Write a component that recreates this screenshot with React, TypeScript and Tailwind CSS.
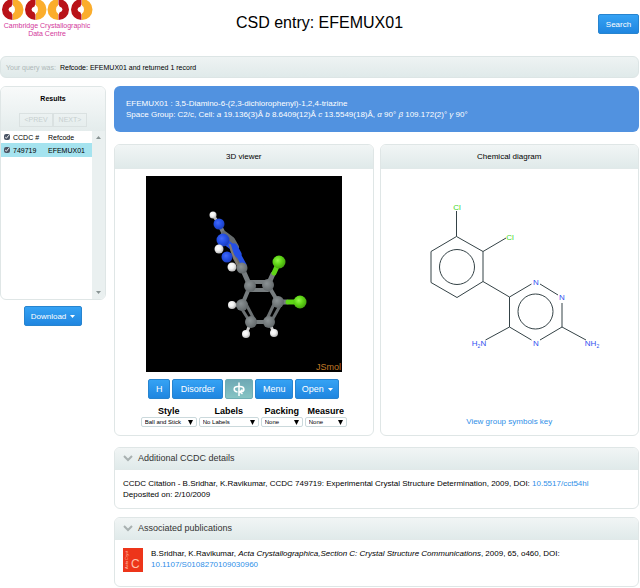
import type { ReactNode } from "react";

const atoms = [
  { x: 213, y: 215, r: 3.5, fill: "url(#hydrogen)" },
  { x: 219, y: 224, r: 5.5, fill: "url(#nitrogen)" },
  { x: 223, y: 240, r: 6.5, fill: "url(#nitrogen)" },
  { x: 219, y: 249, r: 4.5, fill: "url(#hydrogen)" },
  { x: 227, y: 257, r: 5.5, fill: "url(#nitrogen)" },
  { x: 232, y: 267, r: 4.5, fill: "url(#hydrogen)" },
  { x: 242, y: 268, r: 5.5, fill: "url(#carbon)" },
  { x: 250, y: 286, r: 6, fill: "url(#carbon)" },
  { x: 268, y: 285, r: 6, fill: "url(#carbon)" },
  { x: 278, y: 302, r: 6, fill: "url(#carbon)" },
  { x: 269, y: 322, r: 6, fill: "url(#carbon)" },
  { x: 251, y: 322, r: 6, fill: "url(#carbon)" },
  { x: 242, y: 305, r: 6, fill: "url(#carbon)" },
  { x: 279, y: 262, r: 6.5, fill: "url(#chlorine)" },
  { x: 300, y: 302, r: 6.5, fill: "url(#chlorine)" },
  { x: 232, y: 305, r: 4, fill: "url(#hydrogen)" },
  { x: 246, y: 334, r: 4, fill: "url(#hydrogen)" },
  { x: 274, y: 333, r: 4, fill: "url(#hydrogen)" },
];

const atomColors = [
  { id: "carbon", light: "#8b9294", base: "#777d7f", dark: "#606668" },
  { id: "hydrogen", light: "#ffffff", base: "#f0f0f0", dark: "#b5b5b5" },
  { id: "nitrogen", light: "#4469f8", base: "#2450e6", dark: "#1b3cb8" },
  { id: "chlorine", light: "#93f64a", base: "#5fd616", dark: "#449f0e" },
];

const viewerSelects = [
  { id: "style", label: "Style", value: "Ball and Stick", width: "w-14" },
  { id: "labels", label: "Labels", value: "No Labels", width: "w-15" },
  { id: "packing", label: "Packing", value: "None", width: "w-[42px]" },
  { id: "measure", label: "Measure", value: "None", width: "w-[42px]" },
];

const blueButton =
  "flex h-5 items-center justify-center rounded-xs border border-[#2784cf] bg-linear-to-b from-[#35a2f4] to-[#1f86e0] text-white";
const panel = "overflow-hidden rounded-md border border-[#dfe6e6] bg-white";
const panelHeader = "border-b border-[#e1e9e9] bg-linear-to-b from-[#f1f5f5] to-[#e0eaea]";
const link = "text-[#2f8fe8]";

function Caret() {
  return (
    <svg viewBox="0 0 5 3" className="ml-1 h-[3px] w-[5px]" fill="currentColor">
      <path d="M0 0h5L2.5 3z" />
    </svg>
  );
}

function CheckBox({ label }: { label: string }) {
  return <input type="checkbox" defaultChecked aria-label={label} className="mx-[3px] block size-[6px] accent-gray-600" />;
}

function Logo() {
  return (
    <div className="w-[94px] text-center text-[7px] leading-2 whitespace-nowrap text-[#d3389b]">
      <svg viewBox="0 0 94 22" className="block h-[22px] w-[94px]">
        {[12.5, 35.5, 58.5, 81.5].map((x, i) => (
          <g key={x} transform={i === 2 ? `rotate(180 ${x} 9.5)` : undefined}>
            <path d={`M${x} -1a10.5 10.5 0 0 0 0 21v-5.500a3 3 0 0 1-1-2q-3-1-3-3t3-3a3 3 0 0 1 1-2z`} fill="#b91218" />
            <path d={`M${x + 0.5} -1a10.5 10.5 0 0 1 0 21v-6.500q2-1 2-4t-2-4z`} fill="#fbad2c" />
          </g>
        ))}
      </svg>
      Cambridge Crystallographic
      <br />
      Data Centre
    </div>
  );
}

function Molecule() {
  return (
    <svg viewBox="146 176 196 196" className="block size-[196px] bg-black" role="img" aria-label="Ball and stick model">
      <defs>
        {atomColors.map((c) => (
          <radialGradient key={c.id} id={c.id} cx="40%" cy="38%" r="65%">
            <stop offset="0" stopColor={c.light} />
            <stop offset=".5" stopColor={c.base} />
            <stop offset="1" stopColor={c.dark} />
          </radialGradient>
        ))}
      </defs>
      <g fill="none" strokeLinecap="round" strokeLinejoin="round">
        <path d="M213 215l6 9" stroke="#bbb" strokeWidth="3" />
        <path d="M219 224l5 10" stroke="#777d7f" strokeWidth="4" />
        <path d="M224 234l8 6 4 7" stroke="#666b6d" strokeWidth="6" />
        <path d="M223 240l9 6 4 12 5 9" stroke="#6d6a66" strokeWidth="6" />
        <path d="M234 247l4 7" stroke="#2450e6" strokeWidth="7" />
        <path d="M238 254l6 11" stroke="#2450e6" strokeWidth="5" />
        <path d="M223 240l8 6" stroke="#2450e6" strokeWidth="6" />
        <path d="M230 245l3 10 5 10" stroke="#817b70" strokeWidth="2" />
        <path d="M242 268l8 18" stroke="#777d7f" strokeWidth="5" />
        <path d="M250 282h18M250 290h18M268 285l10 17M251 322h18M242 305l8-19" stroke="#777d7f" strokeWidth="4" />
        <path d="M275 302l-9 19M281 304l-10 18M240 306l10 16M246 304l9 17" stroke="#6b7072" strokeWidth="3" />
        <path d="M268 285l5-11M278 302h9" stroke="#777d7f" strokeWidth="5" />
        <path d="M274 273l5-11M288 302h12" stroke="#5fd616" strokeWidth="5" />
        <path d="M242 305h-10M251 322l-5 12M269 322l5 11" stroke="#ccc" strokeWidth="3" />
      </g>
      {atoms.map((atom) => (
        <circle key={`${atom.x}-${atom.y}`} cx={atom.x} cy={atom.y} r={atom.r} fill={atom.fill} />
      ))}
      <text x="341" y="370" textAnchor="end" fontSize="9" fill="#c17b27">JSmol</text>
    </svg>
  );
}

function ChemicalDiagram() {
  return (
    <svg viewBox="399 181 220 190" className="block h-[190px] w-[220px]" fontSize="8" role="img" aria-label="Chemical diagram">
      <g fill="none" stroke="#344246">
        <path d="M456.5 211v25.500l26.500 15v30l-26 16-26-15v-31l25.500-15M483 251.500l23-13.500M483 281.500l26.500 15.500 22-13M509.500 297v30l22 13M540 284l18 11M562 303v24l-22 13M509.500 327l-24 13M562 327l24 13" />
        <circle cx="457" cy="267" r="17.500" />
        <circle cx="535.500" cy="311.500" r="17.500" />
      </g>
      <g textAnchor="middle">
        <g fill="#3fd82a">
          <text x="457" y="210">Cl</text>
          <text x="510" y="240">Cl</text>
        </g>
        <g fill="#2f50f0">
          <text x="536" y="285">N</text>
          <text x="562" y="300">N</text>
          <text x="536" y="346">N</text>
          <text x="479" y="346">H<tspan dy="2" fontSize="5">2</tspan><tspan dy="-2">N</tspan></text>
          <text x="592" y="346">NH<tspan dy="2" fontSize="5">2</tspan></text>
        </g>
      </g>
    </svg>
  );
}

function DetailSection({ title, children }: { title: string; children: ReactNode }) {
  return (
    <section className={panel}>
      <h2 className={`${panelHeader} flex h-[22px] items-center text-[9px] text-[#333]`}>
        <svg viewBox="0 0 10 7" className="mr-[5px] ml-2 h-[7px] w-[10px]" fill="none" stroke="#a9b1b1" strokeWidth="2">
          <path d="M1 1l4 4 4-4" />
        </svg>
        {title}
      </h2>
      {children}
    </section>
  );
}

export default function App() {
  return (
    <div className="min-h-screen bg-white pr-px font-['Liberation_Sans',Arial,sans-serif] text-[8px] leading-[11px] text-black">
      {/* --- HEADER --- */}
      <header className="grid h-14 grid-cols-[1fr_auto_1fr] items-start">
        <Logo />
        <h1 className="pt-3 text-base leading-[22px]">CSD entry: EFEMUX01</h1>
        <button className={`${blueButton} mt-[14px] w-[41px] justify-self-end`}>Search</button>
      </header>

      <div className="flex h-[22px] items-center rounded-md border border-[#dce5e5] bg-linear-to-b from-[#eef3f3] to-[#e0eaea] px-[5px] text-[7px]">
        <span className="mr-1 text-[#aeb8b8]">Your query was:</span>
        Refcode: EFEMUX01 and returned 1 record
      </div>

      <div className="mt-2 flex items-start gap-2">
        {/* --- RESULTS --- */}
        <aside className="w-[106px] shrink-0">
          <div className={`${panel} text-[7px]`}>
            <div className="flex h-11 flex-col items-center justify-between bg-linear-to-b from-[#f8fafa] to-[#e4ecec] pt-1.5 pb-1">
              <h2 className="font-bold">Results</h2>
              <div className="flex">
                <button disabled className="h-3.5 w-[34px] border border-[#dae1e1] leading-3 text-[#c7cfcf]">&lt;PREV</button>
                <button disabled className="h-3.5 w-[34px] border border-[#dae1e1] leading-3 text-[#c7cfcf]">NEXT&gt;</button>
              </div>
            </div>
            <div className="flex h-[168px]">
              <div className="flex-1">
                <table className="w-full table-fixed text-left">
                  <thead>
                    <tr className="h-3">
                      <th className="w-3"><CheckBox label="Select all" /></th>
                      <th className="w-[35px] font-normal">CCDC #</th>
                      <th className="font-normal">Refcode</th>
                    </tr>
                  </thead>
                  <tbody>
                    <tr className="h-3.5 bg-[#a5e3ef]">
                      <td><CheckBox label="Select 749719" /></td>
                      <td>749719</td>
                      <td>EFEMUX01</td>
                    </tr>
                  </tbody>
                </table>
              </div>
              <div className="flex w-[13px] flex-col items-center justify-between bg-[#eaf0f0] py-[5px] text-[#899494]">
                <svg viewBox="0 0 5 3" className="h-[3px] w-[5px]" fill="currentColor"><path d="M0 3h5L2.5 0z" /></svg>
                <svg viewBox="0 0 5 3" className="h-[3px] w-[5px]" fill="currentColor"><path d="M0 0h5L2.5 3z" /></svg>
              </div>
            </div>
          </div>
          <button className={`${blueButton} mx-auto mt-[6px] w-[58px]`}>Download<Caret /></button>
        </aside>

        <main className="min-w-0 flex-1">
          <div className="h-[46px] rounded-md bg-[#5192e0] px-3 pt-3 text-white">
            <p>EFEMUX01 : 3,5-Diamino-6-(2,3-dichlorophenyl)-1,2,4-triazine</p>
            <p>
              Space Group: C2/c, Cell: <i>a</i> 19.136(3)Å <i>b</i> 8.6409(12)Å <i>c</i> 13.5549(18)Å, <i>α</i> 90° <i>β</i> 109.172(2)° <i>γ</i> 90°
            </p>
          </div>

          {/* --- VIEWERS --- */}
          <div className="mt-3 grid grid-cols-2 gap-[6px]">
            <section className={panel}>
              <h2 className={`${panelHeader} flex h-6 items-center justify-center`}>3D viewer</h2>
              <div className="flex flex-col items-center pt-[7px] pb-2">
                <Molecule />
                <div className="mt-[7px] flex gap-[2px] text-[9px]">
                  <button className={`${blueButton} w-[22px]`}>H</button>
                  <button className={`${blueButton} w-[51px]`}>Disorder</button>
                  <button aria-label="Spin" className="flex h-5 w-7 items-center justify-center rounded-xs border border-[#6faeb5] bg-linear-to-b from-[#6fa9b5] to-[#86c4c4] text-white">
                    <svg viewBox="0 0 14 14" className="size-3.5" fill="none" stroke="currentColor" strokeWidth="1.5">
                      <path d="M7 .5V14M5.500 10C1 9.500 1 4.500 6 4.500h2c5 0 5 5 1 5.500M10.500 7.500L8 10l2.500 2" />
                    </svg>
                  </button>
                  <button className={`${blueButton} w-[38px]`}>Menu</button>
                  <button className={`${blueButton} w-11`}>Open<Caret /></button>
                </div>
                <div className="mt-[7px] flex gap-[2px]">
                  {viewerSelects.map((s) => (
                    <div key={s.id} className="flex flex-col items-center">
                      <label htmlFor={s.id} className="text-[9px] font-bold">{s.label}</label>
                      <div className={`${s.width} relative`}>
                        <select id={s.id} className="block h-[10px] w-full appearance-none rounded-xs border border-[#cbd9dc] bg-white pl-[3px] text-[6px] leading-2">
                          <option>{s.value}</option>
                        </select>
                        <svg viewBox="0 0 5 5" className="pointer-events-none absolute top-[3px] right-1 size-[5px]"><path d="M0 0h5L2.5 5z" /></svg>
                      </div>
                    </div>
                  ))}
                </div>
              </div>
            </section>

            <section className={`${panel} flex flex-col`}>
              <h2 className={`${panelHeader} flex h-6 items-center justify-center`}>Chemical diagram</h2>
              <div className="flex flex-1 flex-col items-center justify-between pt-3 pb-2">
                <ChemicalDiagram />
                <a href="#symbols" className={link}>View group symbols key</a>
              </div>
            </section>
          </div>

          {/* --- DETAILS --- */}
          <div className="mt-[11px] flex flex-col gap-2">
            <DetailSection title="Additional CCDC details">
              <div className="p-2">
                <p>
                  CCDC Citation - B.Sridhar, K.Ravikumar, CCDC 749719: Experimental Crystal Structure Determination, 2009, DOI: <a href="#doi" className={link}>10.5517/cct54hl</a>
                </p>
                <p>Deposited on: 2/10/2009</p>
              </div>
            </DetailSection>
            <DetailSection title="Associated publications">
              <div className="flex gap-2 px-2 pt-2 pb-3.5">
                <svg viewBox="0 0 20 24" className="h-6 w-5 shrink-0" fontSize="12">
                  <path d="M0 0h20v24H0z" fill="#ed351a" />
                  <text x="8" y="20" fill="#ffc0aa">C</text>
                  <text transform="rotate(-90 5 21)" x="5" y="21" fontSize="4" fill="#ffc0aa">Acta Cryst</text>
                </svg>
                <p>
                  B.Sridhar, K.Ravikumar, <i>Acta Crystallographica,Section C: Crystal Structure Communications</i>, 2009, 65, o460, DOI:
                  <br />
                  <a href="#publication" className={link}>10.1107/S0108270109030960</a>
                </p>
              </div>
            </DetailSection>
          </div>
        </main>
      </div>
    </div>
  );
}
